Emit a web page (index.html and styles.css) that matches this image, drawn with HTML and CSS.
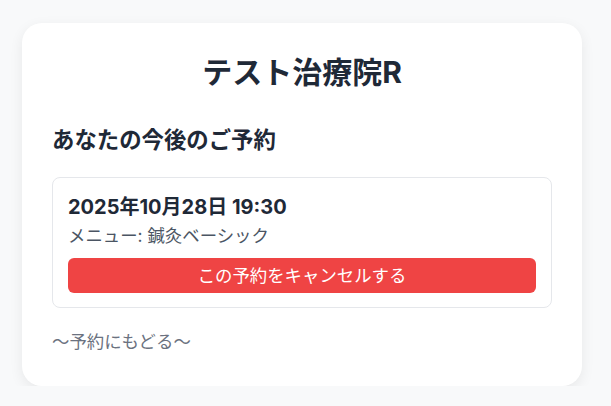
FILE: index.html
```html
<!DOCTYPE html>
<html lang="ja">
<head>
<meta charset="utf-8">
<link rel="stylesheet" href="styles.css">
</head>
<body>
<main class="card">
  <h1 class="title">テスト治療院R</h1>
  <h2 class="heading">あなたの今後のご予約</h2>
  <section class="booking">
    <div class="date">2025年10月28日 19:30</div>
    <div class="menu">メニュー: 鍼灸ベーシック</div>
    <button class="cancel">この予約をキャンセルする</button>
  </section>
  <a class="back">〜予約にもどる〜</a>
</main>
</body>
</html>
```
FILE: styles.css
```css
html, body {
  margin: 0;
  padding: 0;
}
body {
  background: #f8f9fa;
  font-family: Inter, "Noto Sans CJK JP", sans-serif;
  color: #1f2937;
  padding: 23px 0 0 22px;
}
.card {
  box-sizing: border-box;
  width: 560px;
  background: #ffffff;
  border-radius: 20px;
  box-shadow: 0 4px 14px rgba(0, 0, 0, 0.07);
  padding: 26px 30px 32px;
}
.title {
  margin: 0;
  text-align: center;
  font-size: 30px;
  line-height: 46px;
  font-weight: 700;
  color: #1f2937;
}
.heading {
  margin: 29px 0 0;
  font-size: 22.4px;
  line-height: 32px;
  font-weight: 700;
  color: #1f2937;
}
.booking {
  margin-top: 21px;
  border: 1px solid #e5e7eb;
  border-radius: 8px;
  padding: 15px 15px 14px;
}
.date {
  font-size: 20px;
  line-height: 28px;
  font-weight: 700;
  color: #1f2937;
}
.menu {
  margin-top: 2px;
  font-size: 17.4px;
  line-height: 26px;
  color: #4b5563;
}
.cancel {
  display: block;
  width: 100%;
  margin-top: 9px;
  height: 35px;
  border: none;
  border-radius: 6px;
  background: #ef4444;
  color: #ffffff;
  font-family: inherit;
  font-size: 17.4px;
  line-height: 35px;
  padding: 0;
}
.back {
  display: block;
  margin-top: 22px;
  font-size: 17.4px;
  line-height: 24px;
  color: #6b7280;
}
```
